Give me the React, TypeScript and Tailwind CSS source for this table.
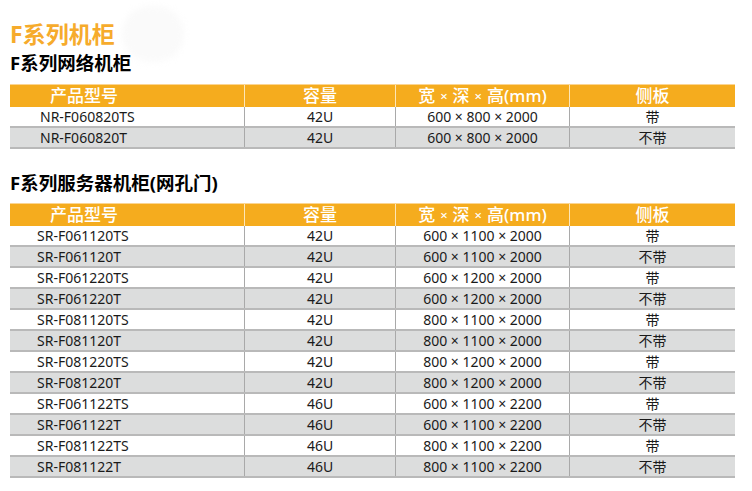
const cols = 'grid grid-cols-[235px_151px_174px_165px]';

const networkRows = [
  { model: 'NR-F060820TS', u: '42U', size: '600 × 800 × 2000', side: '带' },
  { model: 'NR-F060820T', u: '42U', size: '600 × 800 × 2000', side: '不带' },
];

const serverRows = [
  { model: 'SR-F061120TS', u: '42U', size: '600 × 1100 × 2000', side: '带' },
  { model: 'SR-F061120T', u: '42U', size: '600 × 1100 × 2000', side: '不带' },
  { model: 'SR-F061220TS', u: '42U', size: '600 × 1200 × 2000', side: '带' },
  { model: 'SR-F061220T', u: '42U', size: '600 × 1200 × 2000', side: '不带' },
  { model: 'SR-F081120TS', u: '42U', size: '800 × 1100 × 2000', side: '带' },
  { model: 'SR-F081120T', u: '42U', size: '800 × 1100 × 2000', side: '不带' },
  { model: 'SR-F081220TS', u: '42U', size: '800 × 1200 × 2000', side: '带' },
  { model: 'SR-F081220T', u: '42U', size: '800 × 1200 × 2000', side: '不带' },
  { model: 'SR-F061122TS', u: '46U', size: '600 × 1100 × 2200', side: '带' },
  { model: 'SR-F061122T', u: '46U', size: '600 × 1100 × 2200', side: '不带' },
  { model: 'SR-F081122TS', u: '46U', size: '800 × 1100 × 2200', side: '带' },
  { model: 'SR-F081122T', u: '46U', size: '800 × 1100 × 2200', side: '不带' },
];

type Row = { model: string; u: string; size: string; side: string };

function SpecTable({ rows, modelPad }: { rows: Row[]; modelPad: string }) {
  return (
    <div className="w-[725px]">
      {/* Header */}
      <div className={`${cols} h-[23px] bg-[#f5ac1e] border-t border-[#fbd592] text-white text-[17px] font-medium leading-[22px]`}>
        <div className="pl-[40px] border-r border-[#fde6b8]">产品型号</div>
        <div className="text-center border-r border-[#fde6b8]">容量</div>
        <div className="flex items-center justify-center gap-[5px] border-r border-[#fde6b8]">
          <span>宽</span>
          <span className="text-[13px] leading-none">×</span>
          <span>深</span>
          <span className="text-[13px] leading-none">×</span>
          <span>高(mm)</span>
        </div>
        <div className="text-center">侧板</div>
      </div>
      {rows.map((r, i) => (
        <div
          key={r.model}
          className={`${cols} h-[21px] border-b-2 border-[#b9b9b9] text-[14px] leading-[19px] text-[#1a1a1a] ${i % 2 === 1 ? 'bg-[#dcdddd]' : 'bg-white'}`}
        >
          <div className={`${modelPad} border-r border-[#a9a9a9]`}>{r.model}</div>
          <div className="text-center border-r border-[#a9a9a9]">{r.u}</div>
          <div className="text-center border-r border-[#a9a9a9]">{r.size}</div>
          <div className="text-center">{r.side}</div>
        </div>
      ))}
    </div>
  );
}

export default function App() {
  return (
    <div
      className="relative w-[752px] h-[491px] bg-white overflow-hidden pl-[10px]"
      style={{ fontFamily: '"Noto Sans", "Noto Sans CJK SC", sans-serif' }}
    >
      {/* faint watermark */}
      <div className="absolute left-[122px] top-[6px] w-[62px] h-[56px] rounded-full bg-[#fafafa] blur-[3px]" />

      <h1 className="relative pt-[19px] text-[23px] leading-[30px] font-bold text-[#f6ab2c]">F系列机柜</h1>
      <h2 className="relative mt-[1px] text-[18.5px] leading-[25px] font-bold text-black">F系列网络机柜</h2>

      <div className="mt-[9px]">
        <SpecTable rows={networkRows} modelPad="pl-[30px]" />
      </div>

      <h2 className="mt-[21px] text-[18.5px] leading-[25px] font-bold text-black">F系列服务器机柜(网孔门)</h2>

      <div className="mt-[8px]">
        <SpecTable rows={serverRows} modelPad="pl-[27px]" />
      </div>
    </div>
  );
}
